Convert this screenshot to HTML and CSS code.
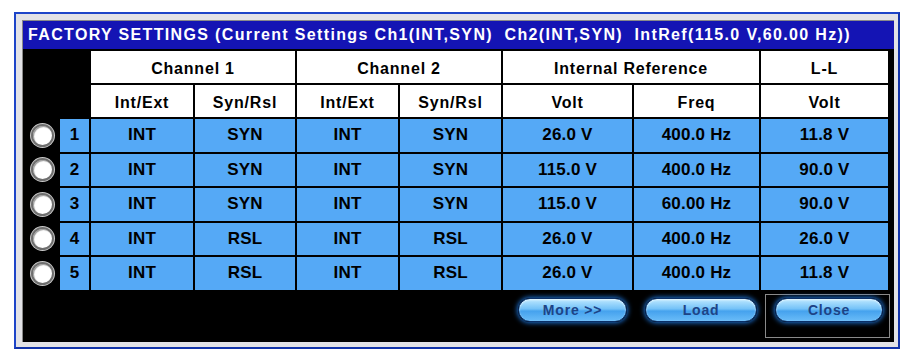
FILE: index.html
```html
<!DOCTYPE HTML>
<html lang="en">
<head>
  <meta charset="UTF-8">
  <title>Factory Settings</title>
  <link rel="stylesheet" href="styles.css">
</head>
<body>
  <div class="window">
    <div class="inner">
      <div class="title">FACTORY SETTINGS (Current Settings Ch1(INT,SYN)  Ch2(INT,SYN)  IntRef(115.0 V,60.00 Hz))</div>
      <div class="panel">
        <div class="grid">
          <!-- header row 1 -->
          <div class="blank"></div>
          <div class="blank"></div>
          <div class="head span2">Channel 1</div>
          <div class="head span2">Channel 2</div>
          <div class="head span2">Internal Reference</div>
          <div class="head">L-L</div>
          <!-- header row 2 -->
          <div class="blank"></div>
          <div class="blank"></div>
          <div class="head">Int/Ext</div>
          <div class="head">Syn/Rsl</div>
          <div class="head">Int/Ext</div>
          <div class="head">Syn/Rsl</div>
          <div class="head">Volt</div>
          <div class="head">Freq</div>
          <div class="head">Volt</div>
          <!-- data -->
          <div class="radio-cell"><span class="radio"></span></div>
          <div class="num">1</div>
          <div class="cell">INT</div><div class="cell">SYN</div>
          <div class="cell">INT</div><div class="cell">SYN</div>
          <div class="cell">26.0 V</div><div class="cell">400.0 Hz</div><div class="cell">11.8 V</div>

          <div class="radio-cell"><span class="radio"></span></div>
          <div class="num">2</div>
          <div class="cell">INT</div><div class="cell">SYN</div>
          <div class="cell">INT</div><div class="cell">SYN</div>
          <div class="cell">115.0 V</div><div class="cell">400.0 Hz</div><div class="cell">90.0 V</div>

          <div class="radio-cell"><span class="radio"></span></div>
          <div class="num">3</div>
          <div class="cell">INT</div><div class="cell">SYN</div>
          <div class="cell">INT</div><div class="cell">SYN</div>
          <div class="cell">115.0 V</div><div class="cell">60.00 Hz</div><div class="cell">90.0 V</div>

          <div class="radio-cell"><span class="radio"></span></div>
          <div class="num">4</div>
          <div class="cell">INT</div><div class="cell">RSL</div>
          <div class="cell">INT</div><div class="cell">RSL</div>
          <div class="cell">26.0 V</div><div class="cell">400.0 Hz</div><div class="cell">26.0 V</div>

          <div class="radio-cell"><span class="radio"></span></div>
          <div class="num">5</div>
          <div class="cell">INT</div><div class="cell">RSL</div>
          <div class="cell">INT</div><div class="cell">RSL</div>
          <div class="cell">26.0 V</div><div class="cell">400.0 Hz</div><div class="cell">11.8 V</div>
        </div>
        <div class="buttons">
          <button class="btn btn-more">More &gt;&gt;</button>
          <button class="btn btn-load">Load</button>
          <div class="focus">
            <button class="btn btn-close">Close</button>
          </div>
        </div>
      </div>
    </div>
  </div>
</body>
</html>
```

FILE: styles.css
```css
body {
    background-color: #fff;
    font-family: "Liberation Sans", Arial, sans-serif;
    margin: 0;
}

/* window frame */
.window {
    background-color: #e2e2e6;
    border: solid 2px #1d44c8;
    border-right-color: #1233a8;
    border-bottom-color: #1233a8;
    box-sizing: border-box;
    height: 337px;
    margin: 12px 0 0 14px;
    padding: 6px 4px 6px 6px;
    width: 886px;
}
.inner {
    border-left: solid 1px #8a8a8a;
    border-top: solid 1px #8a8a8a;
    display: flex;
    flex-direction: column;
    height: 100%;
}

/* title */
.title {
    background-color: #1414b4;
    color: #fff;
    font-size: 16px;
    font-weight: bold;
    height: 28px;
    letter-spacing: 1.35px;
    line-height: 28px;
    padding-left: 5px;
    white-space: pre;
}

/* table panel */
.panel {
    background-color: #000;
    display: flex;
    flex: 1;
    flex-direction: column;
}
.grid {
    display: grid;
    gap: 2px;
    grid-template-columns: 37px 29px 102px 100px 101px 101px 129px 125px 127px;
    grid-template-rows: 32px 32px repeat(5, 32.5px);
    margin-left: -2px;
    padding-top: 2px;
}
.grid > div {
    align-items: center;
    display: flex;
    justify-content: center;
}
.span2 {
    grid-column: span 2;
}
.head {
    background-color: #fff;
    color: #000;
    font-size: 16px;
    font-weight: bold;
    letter-spacing: 0.8px;
    padding-top: 3px;
}
.cell, .num {
    background-color: #55a9f6;
    color: #000;
    font-size: 17px;
    font-weight: bold;
    letter-spacing: 0.2px;
}
.radio {
    background-color: #fff;
    border: solid 2px #6e6e6e;
    border-radius: 50%;
    box-shadow: 0 0 0 1px #c8c8c8, inset 1px 1px 1px #999;
    height: 19px;
    margin-left: 5px;
    width: 19px;
}

/* buttons */
.buttons {
    align-items: flex-start;
    display: flex;
    justify-content: flex-end;
    padding: 4px 4px 0 0;
}
.btn {
    background: linear-gradient(#bde8ff 0%, #74c2f8 45%, #45a2ee 55%, #6abcf8 100%);
    border: solid 1px #0b2f66;
    border-radius: 12px;
    box-shadow: 0 0 5px 1px #1b6fd0, inset 0 1px 2px #e6f7ff;
    color: #1d4386;
    font-family: "Liberation Sans", Arial, sans-serif;
    font-size: 14px;
    font-weight: bold;
    height: 24px;
    letter-spacing: 0.8px;
    padding: 0;
}
.btn-more {
    margin-top: 4px;
    width: 109px;
}
.btn-load {
    margin: 4px 8px 0 18px;
    width: 112px;
}
.focus {
    border: solid 1px #8a8a8a;
    height: 39px;
    padding: 3px 6px 0 9px;
}
.btn-close {
    width: 108px;
}
```
